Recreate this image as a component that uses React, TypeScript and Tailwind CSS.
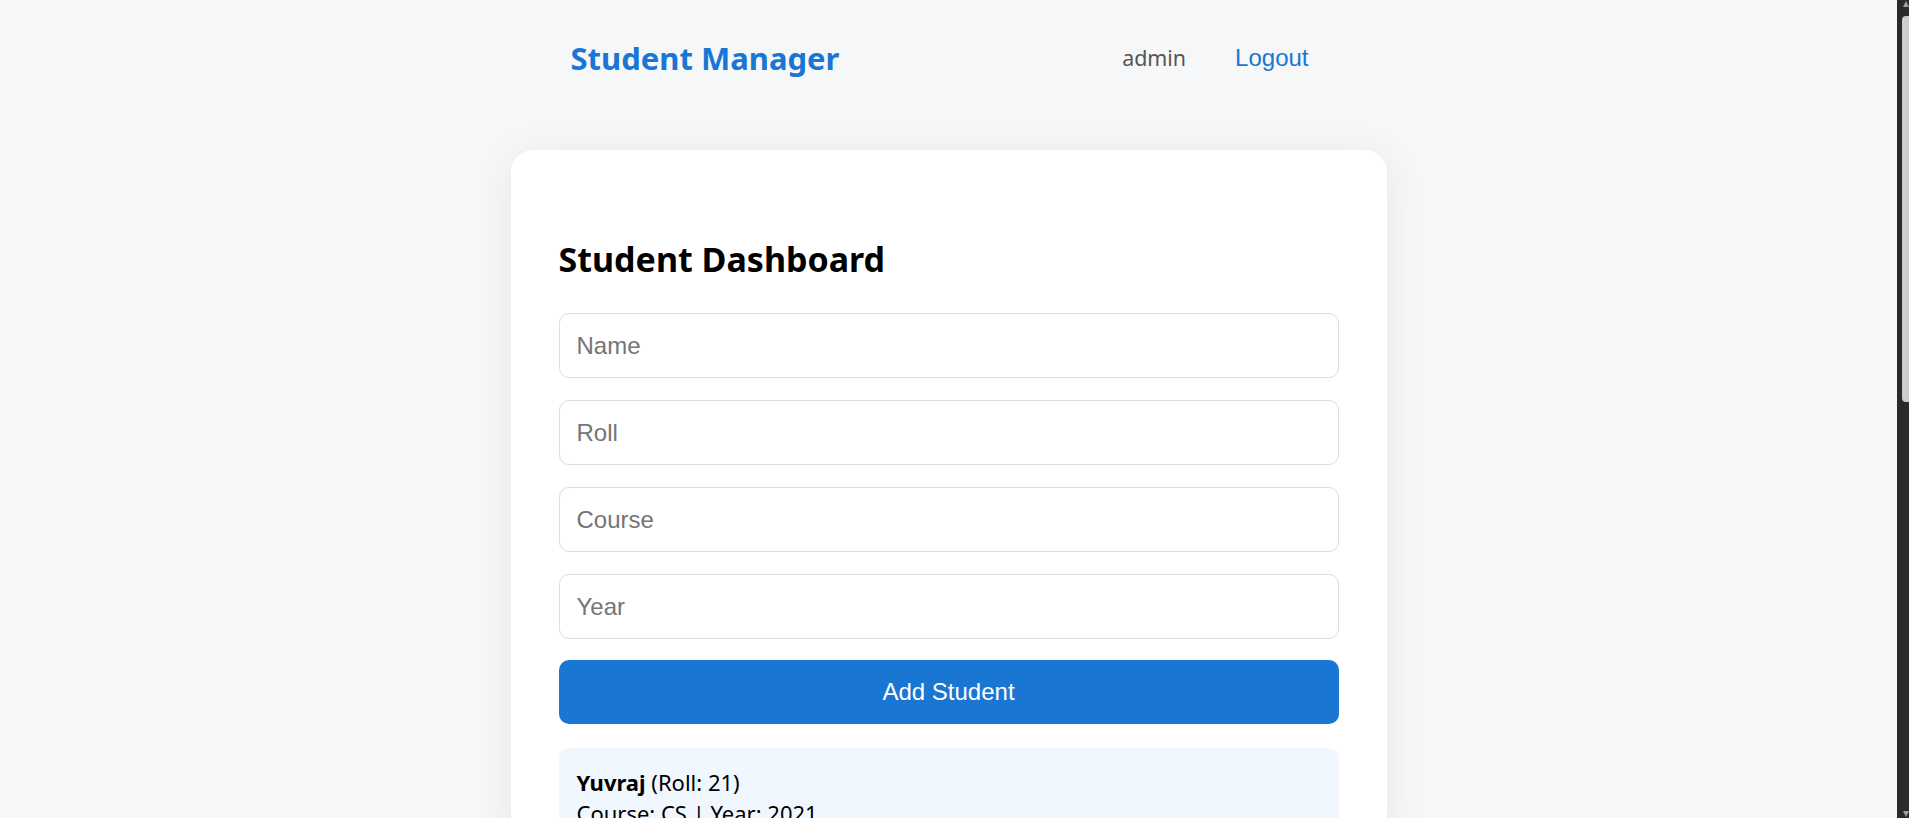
const fields = ['Name', 'Roll', 'Course', 'Year'];

export default function App() {
  return (
    <div className="flex h-[818px] overflow-hidden bg-[#f6f7f9]">
      <div className="flex-1">
        {/* Navbar */}
        <nav className="mx-auto flex h-[116px] w-[800px] items-center justify-between pl-[22px] pr-[40px]">
          <span className="text-[31px] font-bold text-[#1976d2] [font-family:'Noto_Sans',sans-serif]">Student Manager</span>
          <div className="flex items-center gap-[49px]">
            <span className="text-[21.4px] text-[#555] [font-family:'Noto_Sans',sans-serif]">admin</span>
            <button className="text-[24px] text-[#1976d2] [font-family:'Liberation_Sans',Arial,sans-serif]">Logout</button>
          </div>
        </nav>

        {/* Card */}
        <div className="mx-auto mt-[34px] w-[876px] rounded-[22px] bg-white px-[48px] pt-[48px] shadow-[0_6px_40px_rgba(0,0,0,0.07)]">
          <h2 className="mt-[41px] mb-[34px] text-[34px] leading-[40px] font-bold text-black [font-family:'Noto_Sans',sans-serif]">
            Student Dashboard
          </h2>
          <div className="flex flex-col gap-[22px]">
            {fields.map((f) => (
              <input
                key={f}
                placeholder={f}
                className="h-[65px] rounded-[10px] border border-[#dddddd] px-[17px] text-[24px] outline-none placeholder:text-[#757575] [font-family:'Liberation_Sans',Arial,sans-serif]"
              />
            ))}
            <button className="-mt-px h-[64px] rounded-[10px] bg-[#1976d2] text-[24px] text-white [font-family:'Liberation_Sans',Arial,sans-serif]">
              Add Student
            </button>
          </div>
          <div className="mt-[24px] rounded-[10px] bg-[#f0f7ff] px-[18px] pt-[19px] pb-[17px] text-[22px] leading-[31px] text-black [font-family:'Noto_Sans',sans-serif]">
            <div>
              <b>Yuvraj</b> (Roll: 21)
            </div>
            <div>Course: CS | Year: 2021</div>
          </div>
        </div>
      </div>

      {/* Scrollbar */}
      <div className="flex w-[12px] flex-col bg-[#2b2b2b]">
        <svg width="12" height="8" viewBox="0 0 12 8" className="shrink-0">
          <path d="M6 7 L9 1 L12 7 Z" fill="#a0a0a0" />
        </svg>
        <div className="ml-[5px] mt-[8px] h-[386px] rounded-tl-[4px] rounded-bl-[4px] bg-[#cdcdcd]" />
        <div className="flex-1" />
        <svg width="12" height="7" viewBox="0 0 12 7" className="shrink-0">
          <path d="M6 0 L9 6 L12 0 Z" fill="#a0a0a0" />
        </svg>
      </div>
    </div>
  );
}
